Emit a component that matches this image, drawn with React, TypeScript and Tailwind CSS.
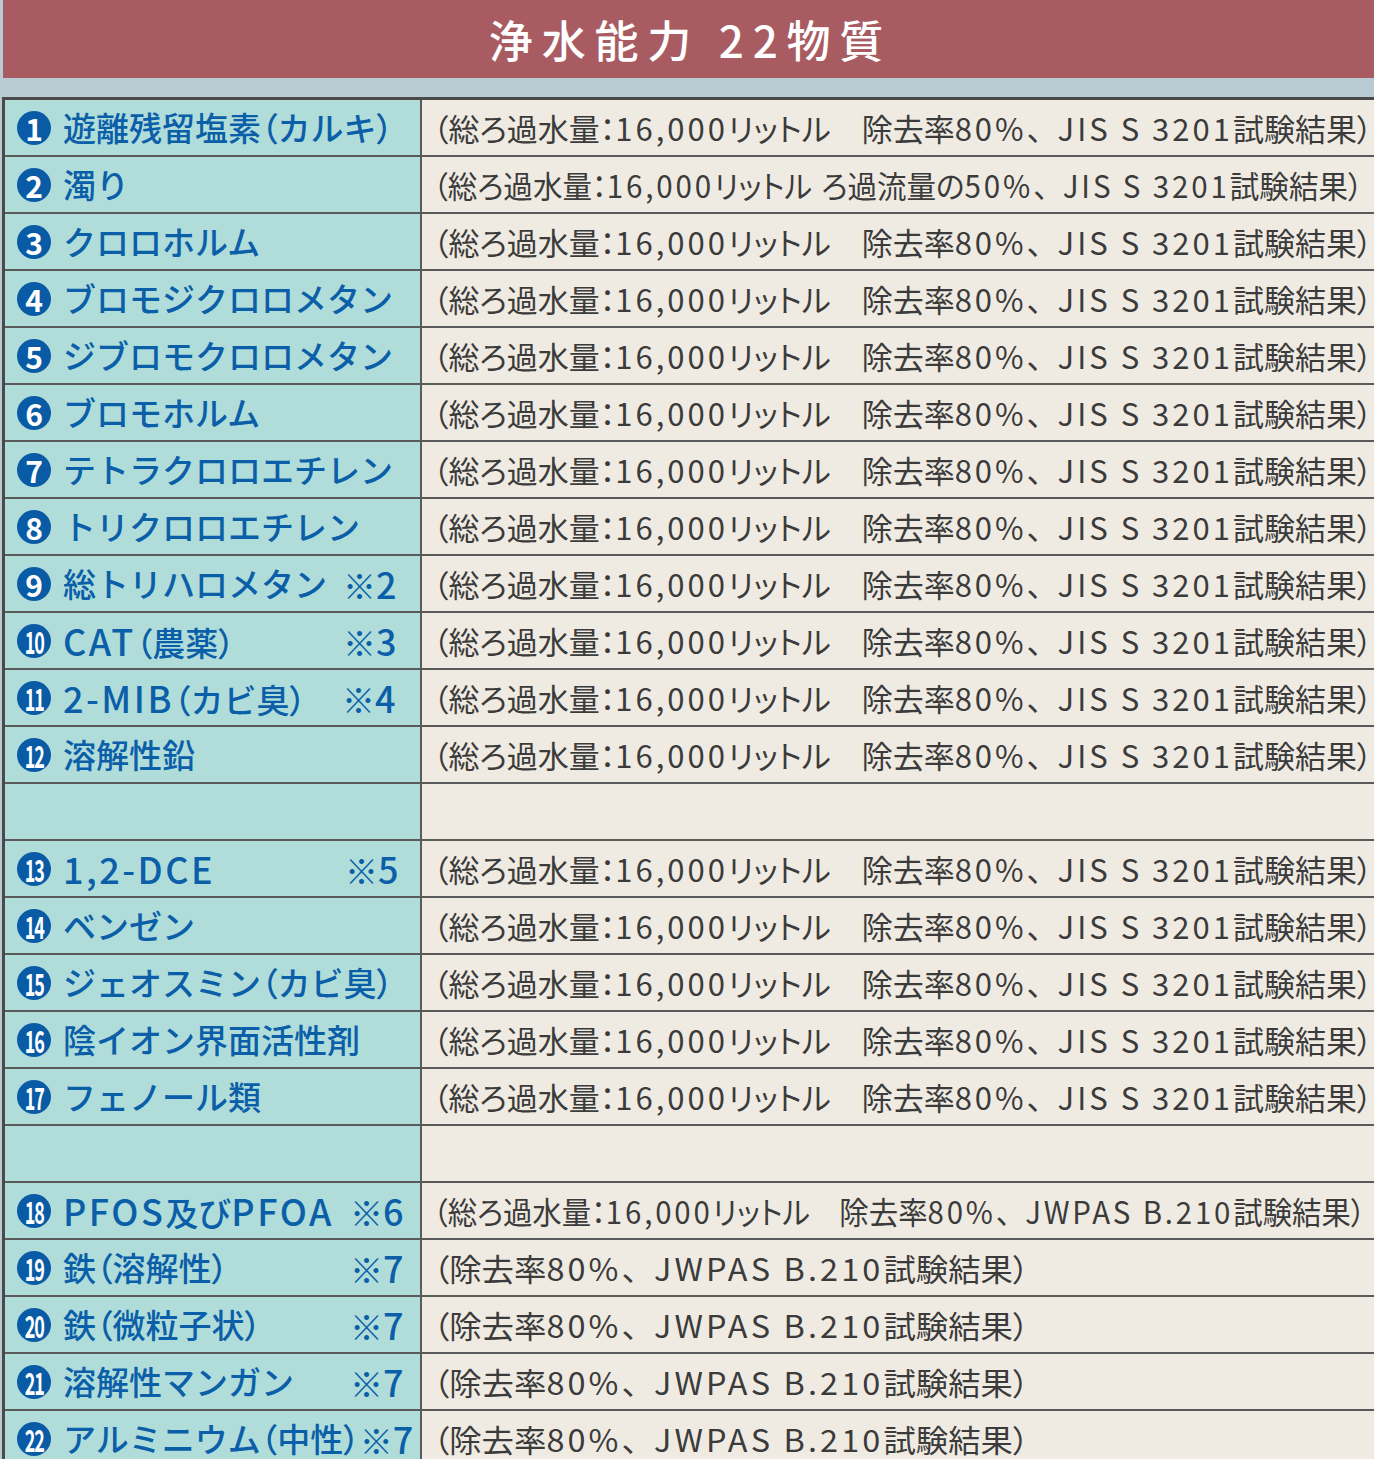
import React from "react";

type Row = { n: number; name: string; note?: string; pr?: string; desc: string; sc?: string } | null;

const A = "（総ろ過水量：16,000リットル　除去率80%、JIS S 3201試験結果）";
const B = "（総ろ過水量：16,000リットル ろ過流量の50%、JIS S 3201試験結果）";
const C = "（総ろ過水量：16,000リットル　除去率80%、JWPAS B.210試験結果）";
const D = "（除去率80%、JWPAS B.210試験結果）";

const rows: Row[] = [
  { n: 1, name: "遊離残留塩素（カルキ）", desc: A },
  { n: 2, name: "濁り", desc: B, sc: "scale-x-[0.953]" },
  { n: 3, name: "クロロホルム", desc: A },
  { n: 4, name: "ブロモジクロロメタン", desc: A },
  { n: 5, name: "ジブロモクロロメタン", desc: A },
  { n: 6, name: "ブロモホルム", desc: A },
  { n: 7, name: "テトラクロロエチレン", desc: A },
  { n: 8, name: "トリクロロエチレン", desc: A },
  { n: 9, name: "総トリハロメタン", note: "※2", pr: "pr-[21px]", desc: A },
  { n: 10, name: "CAT（農薬）", note: "※3", pr: "pr-[21px]", desc: A },
  { n: 11, name: "2-MIB（カビ臭）", note: "※4", pr: "pr-[22px]", desc: A },
  { n: 12, name: "溶解性鉛", desc: A },
  null,
  { n: 13, name: "1,2-DCE", note: "※5", pr: "pr-[19px]", desc: A },
  { n: 14, name: "ベンゼン", desc: A },
  { n: 15, name: "ジェオスミン（カビ臭）", desc: A },
  { n: 16, name: "陰イオン界面活性剤", desc: A },
  { n: 17, name: "フェノール類", desc: A },
  null,
  { n: 18, name: "PFOS及びPFOA", note: "※6", pr: "pr-[14px]", desc: C, sc: "scale-x-[0.948]" },
  { n: 19, name: "鉄（溶解性）", note: "※7", pr: "pr-[14px]", desc: D, sc: "scale-x-[1.045]" },
  { n: 20, name: "鉄（微粒子状）", note: "※7", pr: "pr-[14px]", desc: D, sc: "scale-x-[1.045]" },
  { n: 21, name: "溶解性マンガン", note: "※7", pr: "pr-[14px]", desc: D, sc: "scale-x-[1.045]" },
  { n: 22, name: "アルミニウム（中性）", note: "※7", pr: "pr-[14px]", desc: D, sc: "scale-x-[1.045]" },
];

type Kind = "palt" | "latin" | "plain";

function kindOf(ch: string, side: "left" | "right"): Kind {
  if (/[A-Za-z0-9,.%\- ]/.test(ch)) return "latin";
  if (side === "left") return "（）：".includes(ch) ? "palt" : "plain";
  return ch === "、" ? "plain" : "palt";
}

function T({ t, side }: { t: string; side: "left" | "right" }) {
  const parts: { s: string; k: Kind }[] = [];
  for (const ch of t) {
    const k = kindOf(ch, side);
    const last = parts[parts.length - 1];
    if (last && last.k === k) last.s += ch;
    else parts.push({ s: ch, k });
  }
  const latinCls = side === "left" ? "text-[36px] tracking-[2.5px]" : "tracking-[3px]";
  return (
    <>
      {parts.map((x, i) =>
        x.k === "palt" ? (
          <span key={i} className="[font-feature-settings:'palt']">
            {x.s}
          </span>
        ) : x.k === "latin" ? (
          <span key={i} className={latinCls}>
            {x.s}
          </span>
        ) : (
          <React.Fragment key={i}>{x.s}</React.Fragment>
        )
      )}
    </>
  );
}

function Circle({ n }: { n: number }) {
  return (
    <span className="flex h-[34px] w-[34px] shrink-0 items-center justify-center rounded-full bg-[#0a5ba6] text-white">
      <span
        className={
          n >= 10
            ? "inline-block scale-x-[0.58] text-[31px] font-bold leading-none tracking-[-2px]"
            : "inline-block text-[30px] font-bold leading-none"
        }
      >
        {n}
      </span>
    </span>
  );
}

export default function App() {
  return (
    <div
      className="min-h-[1459px] w-[1374px] overflow-hidden bg-[#b9cad2] pl-[3px]"
      style={{ fontFamily: '"Noto Sans CJK JP", "Noto Sans", sans-serif' }}
    >
      <div className="flex h-[78px] items-center justify-center bg-[#a85c62] pl-[4px]">
        <span className="text-[44px] font-medium leading-none tracking-[0.2em] text-white">浄水能力 22物質</span>
      </div>
      <div className="h-[19px]" />
      <div className="ml-[-1px] border-l-[3px] border-t-[3px] border-[#4a4a4a] bg-[#f0ebe2]">
        <div className="grid grid-cols-[417px_1fr]">
          {rows.map((r, i) => (
            <React.Fragment key={i}>
              <div className="flex h-[57px] items-center border-b-2 border-r-2 border-[#5a5a5a] bg-[#b0ddd9] pl-[12px] text-[#0b5ea8]">
                {r && (
                  <>
                    <Circle n={r.n} />
                    <span className="ml-[12px] whitespace-nowrap text-[33px] font-medium leading-none">
                      <T t={r.name} side="left" />
                    </span>
                    {r.note && (
                      <span className={"ml-auto whitespace-nowrap text-[33px] font-medium leading-none " + (r.pr ?? "")}>
                        <T t={r.note} side="left" />
                      </span>
                    )}
                  </>
                )}
              </div>
              <div className="flex h-[57px] items-center overflow-hidden border-b-2 border-[#5a5a5a] pl-[11px] text-[#3b3b3b]">
                {r && (
                  <span
                    className={
                      "inline-block origin-left whitespace-nowrap text-[31px] leading-none " + (r.sc ?? "")
                    }
                  >
                    <T t={r.desc} side="right" />
                  </span>
                )}
              </div>
            </React.Fragment>
          ))}
        </div>
      </div>
    </div>
  );
}
